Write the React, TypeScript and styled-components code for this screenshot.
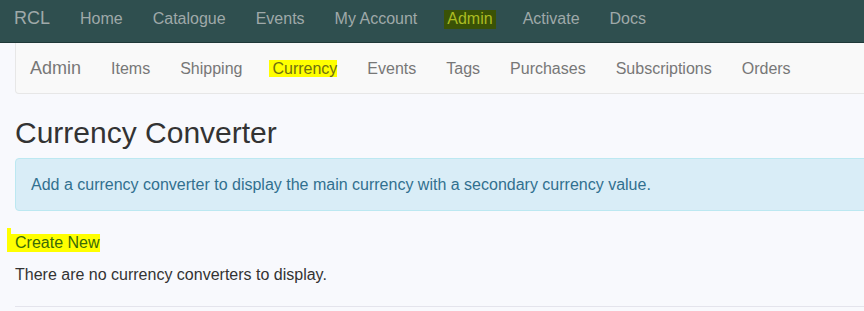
import styled, { createGlobalStyle } from 'styled-components';

const GlobalStyle = createGlobalStyle`
  html, body {
    margin: 0;
    padding: 0;
    overflow: hidden;
    background-color: #f8f9fd;
    font-family: "Liberation Sans", Arial, sans-serif;
    font-size: 16px;
    color: #333;
  }
`;

const TopBar = styled.nav`
  display: flex;
  align-items: baseline;
  height: 34px;
  padding: 8px 0 0 14px;
  background-color: #2f4f4f;
  border-bottom: 1px solid #1f3838;
  white-space: nowrap;
`;

const Brand = styled.a<{ $dark?: boolean }>`
  font-size: 18px;
  line-height: 20px;
  color: ${(p) => (p.$dark ? '#777' : '#9fa9a9')};
  padding-right: 15px;
  text-decoration: none;
`;

const TopLink = styled.a`
  font-size: 16px;
  line-height: 20px;
  padding: 0 15px;
  color: #9fa9a9;
  text-decoration: none;
`;

const Marked = styled.span<{ $tone: 'dark' | 'light' | 'link' }>`
  position: relative;
  padding: ${(p) =>
    p.$tone === 'dark' ? '0 3px 2px' : p.$tone === 'link' ? '0 1px 1px 8px' : '0 0 0 3px'};
  margin-left: ${(p) => (p.$tone === 'link' ? '-8px' : '-3px')};
  margin-right: ${(p) => (p.$tone === 'dark' ? '-3px' : '0')};
  background-color: ${(p) => (p.$tone === 'dark' ? '#3a5206' : '#ffff00')};
  color: ${(p) =>
    p.$tone === 'dark' ? '#abbc22' : p.$tone === 'link' ? '#3a6a08' : '#6f6f10'};
`;

const Stray = styled.span`
  position: absolute;
  left: 0;
  top: -6px;
  width: 4px;
  height: 8px;
  background-color: #ffff00;
`;

const Page = styled.div`
  width: 1140px;
  margin-left: 15px;
`;

const SubNav = styled.div`
  display: flex;
  align-items: baseline;
  height: 35px;
  padding: 15px 0 0 14px;
  background-color: #f9f9f9;
  border: 1px solid #e7e7e7;
  border-top: none;
  border-radius: 0 0 4px 4px;
  white-space: nowrap;
`;

const SubLink = styled.a`
  font-size: 16px;
  line-height: 20px;
  padding: 0 15px;
  color: #777;
  text-decoration: none;
`;

const Title = styled.h1`
  font-size: 30px;
  font-weight: 500;
  line-height: 33px;
  margin: 22px 0 9px;
  color: #333;
`;

const Alert = styled.div`
  padding: 14px 15px;
  line-height: 23px;
  background-color: #d9edf7;
  border: 1px solid #bce8f1;
  border-radius: 4px;
  color: #31708f;
`;

const Para = styled.p<{ $top?: number }>`
  margin: ${(p) => p.$top ?? 0}px 0 9px;
  line-height: 23px;
`;

const Rule = styled.hr`
  margin: 20px 0 0;
  border: none;
  border-top: 1px solid #e4e4ec;
`;

const topLinks = ['Home', 'Catalogue', 'Events', 'My Account', 'Admin', 'Activate', 'Docs'];
const subLinks = ['Items', 'Shipping', 'Currency', 'Events', 'Tags', 'Purchases', 'Subscriptions', 'Orders'];

export default function App() {
  return (
    <>
      <GlobalStyle />
      <TopBar>
        <Brand href="#">RCL</Brand>
        {topLinks.map((l) => (
          <TopLink key={l} href="#">
            {l === 'Admin' ? <Marked $tone="dark">{l}</Marked> : l}
          </TopLink>
        ))}
      </TopBar>
      <Page>
        <SubNav>
          <Brand $dark href="#">Admin</Brand>
          {subLinks.map((l) => (
            <SubLink key={l} href="#">
              {l === 'Currency' ? <Marked $tone="light">{l}</Marked> : l}
            </SubLink>
          ))}
        </SubNav>
        <Title>Currency Converter</Title>
        <Alert>Add a currency converter to display the main currency with a secondary currency value.</Alert>
        <Para $top={20}>
          <Marked $tone="link">
            <Stray />
            Create New
          </Marked>
        </Para>
        <Para>There are no currency converters to display.</Para>
        <Rule />
      </Page>
    </>
  );
}
